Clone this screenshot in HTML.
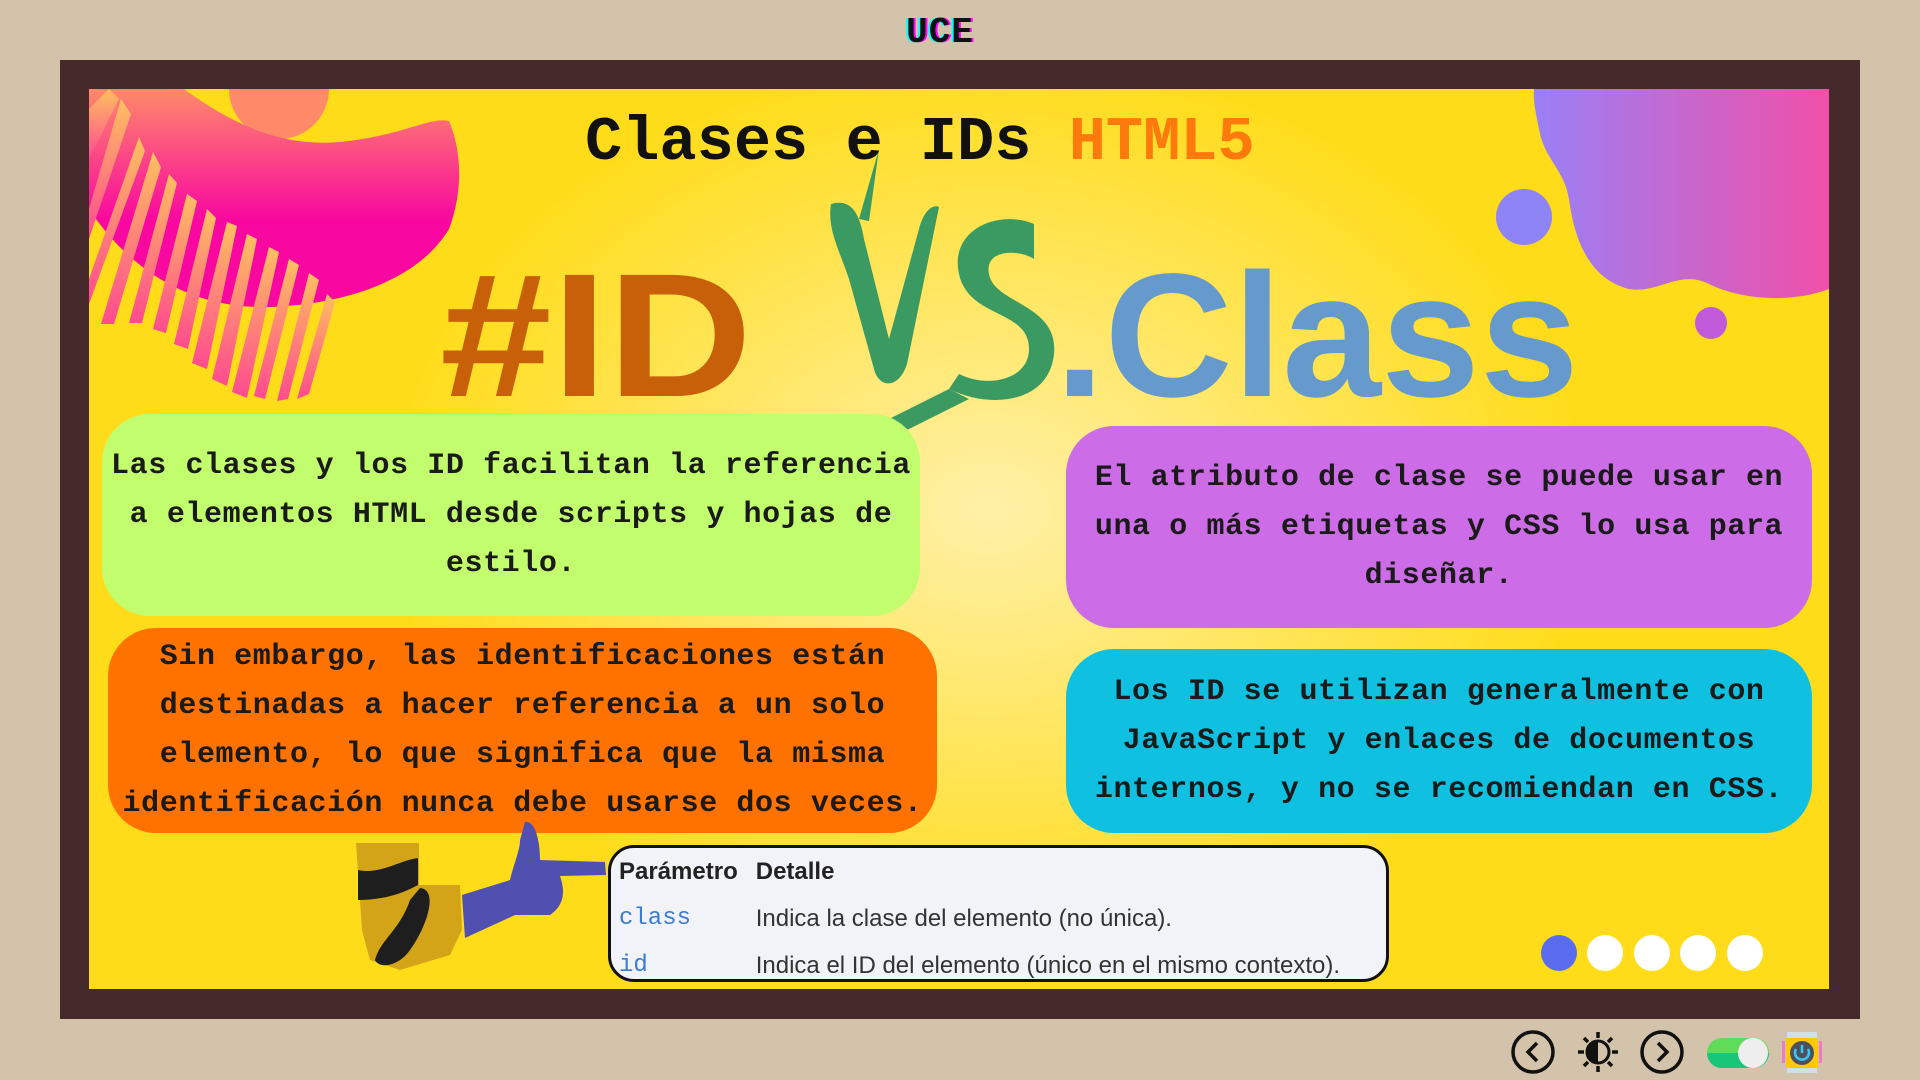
<!DOCTYPE html>
<html><head><meta charset="utf-8"><style>
*{margin:0;padding:0;box-sizing:border-box}
body{width:1920px;height:1080px;background:#d3c3aa;position:relative;overflow:hidden;font-family:"Liberation Sans",sans-serif}
.uce{position:absolute;left:0;width:1880px;top:12px;text-align:center;font:bold 36px "Liberation Mono",monospace;color:#111;text-shadow:-2px 0 #0ff,2px 0 #f0f;letter-spacing:1px}
.frame{position:absolute;left:60px;top:60px;width:1800px;height:959px;background:#45292b}
.inner{position:absolute;left:89px;top:89px;width:1740px;height:900px;overflow:hidden;background:radial-gradient(ellipse 600px 450px at 900px 420px,#fff0a8 0%,#ffe55a 55%,#ffdc1a 100%)}
.abs{position:absolute}
.title{left:496px;top:18px;font:bold 62px "Liberation Mono",monospace;color:#111;white-space:nowrap}
.title span{color:#ff7a0c}
.big{font-weight:bold;font-family:"Liberation Sans",sans-serif;line-height:1;white-space:nowrap;transform-origin:0 0}
.box{position:absolute;border-radius:48px;text-align:center;font:bold 30px/49px "Liberation Mono",monospace;color:#1a1a1a;letter-spacing:.6px;display:flex;align-items:center;justify-content:center}
table{border-collapse:collapse}
.tbl{position:absolute;left:519px;top:756px;width:781px;height:137px;background:#f2f3f8;border:3px solid #111;border-radius:26px;padding:0 0 0 6px;font-size:24px;color:#333}
.tbl td{height:47px;padding:0 16px 0 2px;white-space:nowrap}
.tbl .c{font-family:"Liberation Mono",monospace;color:#3a7bd5}
.dot{position:absolute;top:846px;width:36px;height:36px;border-radius:50%;background:#fff}
</style></head><body>
<div class="uce">UCE</div>
<div class="frame"></div>
<div class="inner">
<svg class="abs" style="left:0;top:0" width="1740" height="900">
<defs>
<linearGradient id="pk" x1="0" y1="0" x2="0" y2="1"><stop offset="0" stop-color="#ff8a6a"/><stop offset=".6" stop-color="#f808a0"/></linearGradient>
<linearGradient id="st" x1="0" y1="0" x2="0" y2="1"><stop offset="0" stop-color="#ffc060"/><stop offset="1" stop-color="#ff4a90"/></linearGradient>
<linearGradient id="pu" x1="0" y1="0" x2="1" y2="0"><stop offset="0" stop-color="#9a80f5"/><stop offset="1" stop-color="#f050a8"/></linearGradient>
</defs>
<circle cx="190" cy="0" r="50" fill="#ff8a6a"/>
<path d="M0 0 L95 0 C150 40 200 60 260 52 C320 44 340 28 360 32 C372 60 375 100 360 140 C330 190 260 215 180 218 C100 220 40 180 0 120 Z" fill="url(#pk)"/>
<g fill="url(#st)">
<path d="M0 20 L20 0 L30 10 L0 70Z"/><path d="M0 120 L32 10 L42 25 L0 150Z"/>
<path d="M0 190 L50 48 L56 62 L0 215Z"/><path d="M12 235 L64 63 L72 78 L25 235Z"/>
<path d="M40 234 L80 85 L88 94 L53 234Z"/><path d="M64 240 L98 105 L108 112 L77 244Z"/>
<path d="M85 255 L118 120 L127 129 L99 260Z"/><path d="M103 274 L138 133 L148 137 L118 280Z"/>
<path d="M123 290 L158 145 L168 150 L138 297Z"/><path d="M143 303 L180 158 L190 163 L158 309Z"/>
<path d="M165 307 L200 170 L210 176 L176 310Z"/><path d="M188 312 L220 184 L230 191 L199 310Z"/>
<path d="M208 310 L238 205 L246 213 L220 305Z"/>
</g>
<path d="M1445 0 L1740 0 L1740 200 C1700 215 1650 210 1620 195 C1590 180 1570 205 1540 200 C1500 190 1485 150 1480 110 C1475 80 1455 70 1450 40 C1446 20 1444 10 1445 0Z" fill="url(#pu)"/>
<circle cx="1435" cy="128" r="28" fill="#8f84f5"/>
<circle cx="1622" cy="234" r="16" fill="#c05ad8"/>
<g fill="#3a9a62">
<path d="M742 115 C760 110 770 120 775 150 L800 250 L830 140 C835 120 845 115 850 118 L818 275 C810 300 790 300 785 280 L760 190 C750 160 738 140 742 115Z"/>
<path d="M945 135 C910 120 860 140 870 185 C880 230 940 220 940 260 C940 290 900 300 870 285 L860 300 C900 320 960 315 965 265 C970 215 905 215 900 185 C895 160 930 160 945 170Z"/>
<path d="M790 60 L770 130 L780 132Z"/>
<path d="M860 300 L800 330 L760 355 L820 340 L880 310Z"/>
</g>
</svg>
<div class="abs title">Clases e IDs <span>HTML5</span></div>
<div class="abs big" style="left:351px;top:159px;color:#c8600a;font-size:176px;transform:scaleX(1.14)">#ID</div>
<div class="abs big" style="left:966px;top:159px;color:#6699cc;font-size:176px;transform:scaleX(1.01)">.Class</div>
<div class="box" style="left:13px;top:325px;width:818px;height:202px;background:#c1fd6c">Las clases y los ID facilitan la referencia<br>a elementos HTML desde scripts y hojas de<br>estilo.</div>
<div class="box" style="left:19px;top:539px;width:829px;height:205px;background:#ff7200">Sin embargo, las identificaciones están<br>destinadas a hacer referencia a un solo<br>elemento, lo que significa que la misma<br>identificación nunca debe usarse dos veces.</div>
<div class="box" style="left:977px;top:337px;width:746px;height:202px;background:#cc6ce6">El atributo de clase se puede usar en<br>una o más etiquetas y CSS lo usa para<br>diseñar.</div>
<div class="box" style="left:977px;top:560px;width:746px;height:184px;background:#0fc0e0">Los ID se utilizan generalmente con<br>JavaScript y enlaces de documentos<br>internos, y no se recomiendan en CSS.</div>
<svg class="abs" style="left:251px;top:731px" width="280" height="160">
<path d="M16 23 L79 23 L79 65 L120 65 L122 110 L110 135 L60 150 L30 140 L22 110 Z" fill="#d4a418"/>
<path d="M18 50 C40 55 60 40 78 38 L78 65 C60 75 40 80 18 80Z" fill="#1e1e1e"/>
<path d="M80 68 C100 70 85 110 70 130 C60 145 40 150 35 140 C40 120 60 110 70 80Z" fill="#1e1e1e"/>
<path d="M122 75 L170 60 C175 40 180 30 180 20 L185 2 C195 0 200 20 200 40 L265 42 L266 55 L220 56 C225 70 225 85 210 95 L175 95 L125 118Z" fill="#5050b0"/>
</svg>
<div class="tbl"><table>
<tr><td style="font-weight:bold;color:#222">Parámetro</td><td style="font-weight:bold;color:#222">Detalle</td></tr>
<tr><td class="c">class</td><td>Indica la clase del elemento (no única).</td></tr>
<tr><td class="c">id</td><td>Indica el ID del elemento (único en el mismo contexto).</td></tr>
</table></div>
<div class="dot" style="left:1452px;background:#5a6cf0"></div>
<div class="dot" style="left:1498px"></div>
<div class="dot" style="left:1545px"></div>
<div class="dot" style="left:1591px"></div>
<div class="dot" style="left:1638px"></div>
</div>
<svg class="abs" style="left:1500px;top:1025px" width="360" height="55">
<g fill="none" stroke="#111" stroke-width="3.5">
<circle cx="33" cy="27" r="20"/><path d="M37 18 L28 27 L37 36"/>
<circle cx="162" cy="27" r="20"/><path d="M158 18 L167 27 L158 36"/>
<path d="M98 7v6M98 41v6M78 27h6M112 27h6M84 13l4 4M112 13l-4 4M84 41l4-4M112 41l-4-4"/>
</g>
<circle cx="98" cy="27" r="11" fill="none" stroke="#111" stroke-width="3"/>
<path d="M98 16 A11 11 0 0 0 98 38Z" fill="#111"/>
<rect x="207" y="13" width="62" height="30" rx="15" fill="#60dc5a"/>
<path d="M207 28 h62 a15 15 0 0 1 -15 15 h-32 a15 15 0 0 1 -15 -15z" fill="#18c67a"/>
<circle cx="253" cy="28" r="15" fill="#eee"/>
<rect x="287" y="7" width="30" height="6" fill="#d0e0ea"/><rect x="287" y="42" width="30" height="6" fill="#d0e0ea"/>
<rect x="282" y="16" width="3" height="22" fill="#f07ac0"/><rect x="319" y="16" width="3" height="22" fill="#f07ac0"/>
<rect x="286" y="13" width="32" height="30" rx="2" fill="#ffc800"/>
<circle cx="302" cy="28" r="12" fill="#4a5060"/>
<path d="M296 24 A7 7 0 1 0 308 24 M302 20 V28" fill="none" stroke="#3ac8f0" stroke-width="2.5"/>
</svg>
</body></html>
